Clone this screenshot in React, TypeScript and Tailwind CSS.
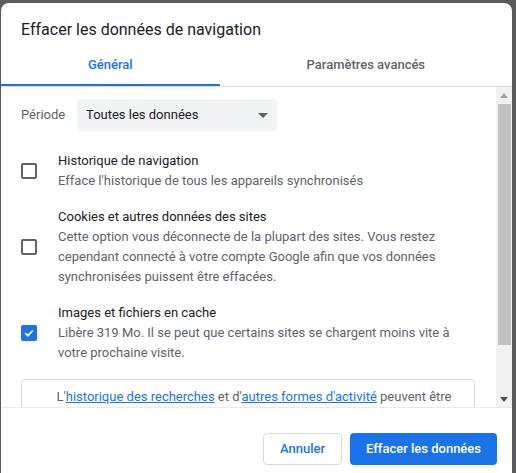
import React from "react";

function Checkbox({ checked }: { checked?: boolean }) {
  if (checked) {
    return (
      <div className="w-4 h-4 rounded-[2px] bg-[#1a73e8] flex items-center justify-center shrink-0">
        <svg width="12" height="12" viewBox="0 0 12 12">
          <path d="M2.2 6.2 L4.8 8.7 L9.8 3.5" fill="none" stroke="#fff" strokeWidth="1.8" />
        </svg>
      </div>
    );
  }
  return <div className="w-4 h-4 rounded-[2px] border-2 border-[#5f6368] shrink-0" />;
}

function Row({
  checked,
  label,
  desc,
  className,
}: {
  checked?: boolean;
  label: string;
  desc: string;
  className?: string;
}) {
  return (
    <div className={"flex items-center " + (className ?? "")}>
      <Checkbox checked={checked} />
      <div className="ml-[21px] w-[417px] text-[13px] leading-[20px]">
        <div className="text-[#202124]">{label}</div>
        <div className="text-[#5f6368]">{desc}</div>
      </div>
    </div>
  );
}

export default function App() {
  return (
    <div className="w-[516px] h-[473px] bg-[#5b5b5b] overflow-hidden pt-[3px] pl-[1px] font-['Roboto',sans-serif]">
      <div className="w-[511px] h-[470px] bg-white rounded-t-lg flex flex-col overflow-hidden">
        {/* Title */}
        <div className="h-[43px] pl-[20px] pt-[15px] text-[16px] leading-[24px] text-[#202124]">
          Effacer les données de navigation
        </div>
        {/* Tabs */}
        <div className="flex border-b border-[#dadce0] h-[41px]">
          <div className="flex-auto flex flex-col">
            <div className="flex-1 flex items-center justify-center text-[13px] font-medium text-[#1a73e8]">
              Général
            </div>
            <div className="h-[2px] bg-[#1a73e8]" />
          </div>
          <div className="flex-auto flex flex-col">
            <div className="flex-1 flex items-center justify-center text-[13px] font-medium text-[#5f6368]">
              Paramètres avancés
            </div>
            <div className="h-[2px]" />
          </div>
        </div>
        {/* Content */}
        <div className="h-[321px] flex border-b border-[#e8eaed]">
          <div className="flex-1 overflow-hidden pl-[20px] pr-[21px] pt-[12px]">
            <div className="flex items-center h-[32px]">
              <span className="text-[13px] text-[#5f6368] w-[56px]">Période</span>
              <div className="w-[200px] h-[32px] rounded-[4px] bg-[#f1f3f4] flex items-center justify-between pl-[9px] pr-[9px]">
                <span className="text-[13px] text-[#202124]">Toutes les données</span>
                <svg width="10" height="5" viewBox="0 0 10 5">
                  <path d="M0 0 L10 0 L5 5 Z" fill="#5f6368" />
                </svg>
              </div>
            </div>
            <Row
              className="mt-[20px]"
              label="Historique de navigation"
              desc="Efface l'historique de tous les appareils synchronisés"
            />
            <Row
              className="mt-[16px]"
              label="Cookies et autres données des sites"
              desc="Cette option vous déconnecte de la plupart des sites. Vous restez cependant connecté à votre compte Google afin que vos données synchronisées puissent être effacées."
            />
            <Row
              checked
              className="mt-[16px]"
              label="Images et fichiers en cache"
              desc="Libère 319 Mo. Il se peut que certains sites se chargent moins vite à votre prochaine visite."
            />
            <div className="mt-[16px] border border-[#dadce0] rounded-[4px] pt-[7px] pb-[8px] pl-[28px] pr-[16px] text-center text-[13px] leading-[20px] text-[#5f6368]">
              L'<span className="text-[#1a73e8] underline">historique des recherches</span> et d'<span className="text-[#1a73e8] underline">autres formes d'activité</span> peuvent être
            </div>
          </div>
          {/* Scrollbar */}
          <div className="w-[16px] bg-[#f1f1f1] flex flex-col items-center">
            <div className="h-[16px] flex items-center justify-center">
              <svg width="8" height="5" viewBox="0 0 8 5">
                <path d="M0 5 L8 5 L4 0 Z" fill="#a3a3a3" />
              </svg>
            </div>
            <div className="w-[13px] h-[241px] bg-[#c1c1c1] mt-[1px]" />
            <div className="flex-1" />
            <div className="h-[16px] flex items-center justify-center">
              <svg width="8" height="5" viewBox="0 0 8 5">
                <path d="M0 0 L8 0 L4 5 Z" fill="#505050" />
              </svg>
            </div>
          </div>
        </div>
        {/* Footer */}
        <div className="flex justify-end gap-[8px] pt-[25px] pr-[15px]">
          <button className="w-[79px] h-[32px] rounded-[4px] border border-[#dadce0] bg-white text-[13px] font-medium text-[#1a73e8]">
            Annuler
          </button>
          <button className="w-[147px] h-[32px] rounded-[4px] bg-[#1a73e8] text-[13px] font-medium text-white">
            Effacer les données
          </button>
        </div>
      </div>
    </div>
  );
}
